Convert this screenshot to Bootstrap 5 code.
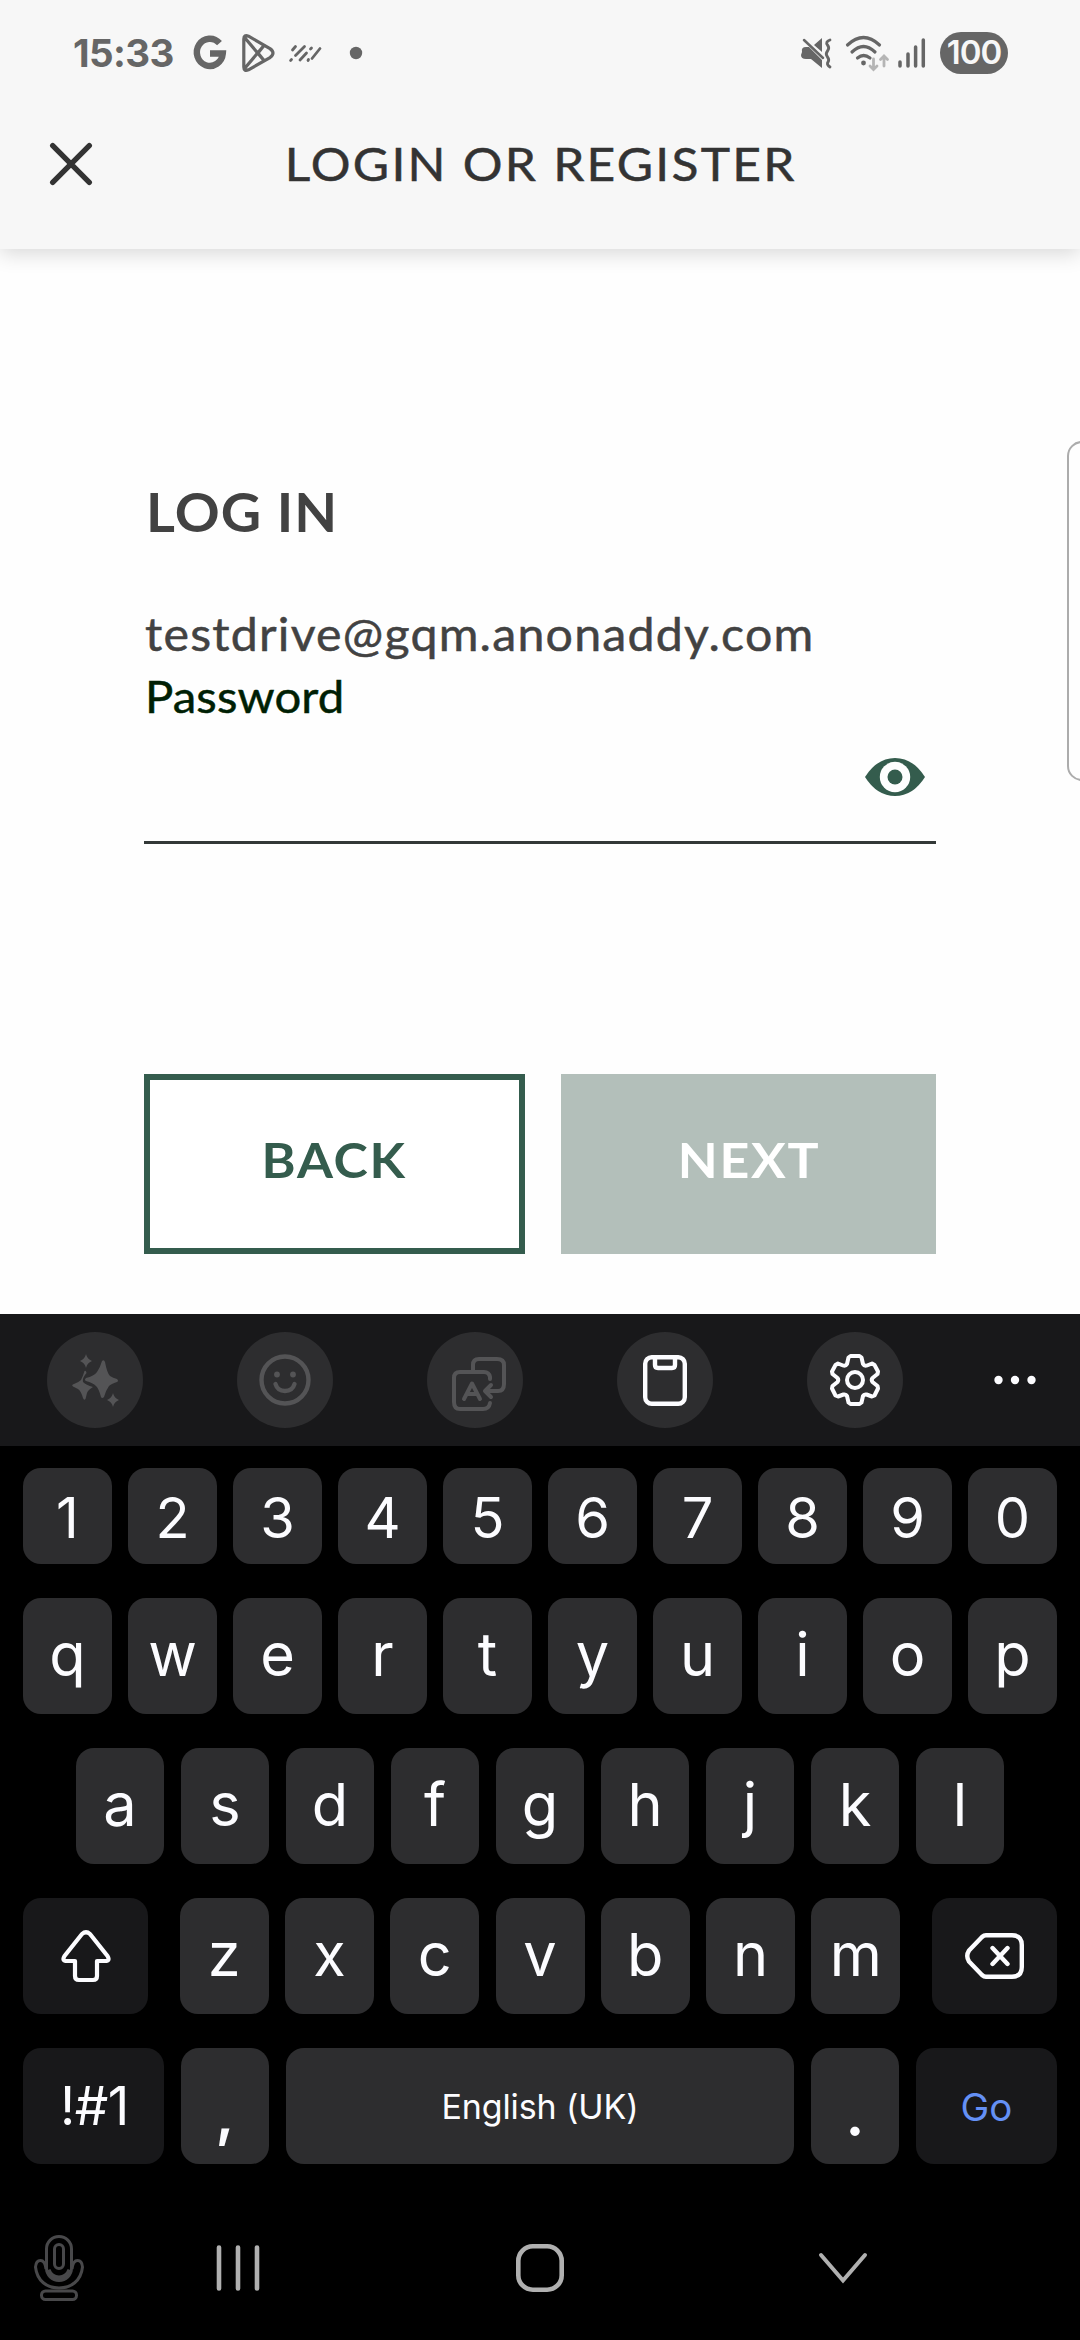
<!DOCTYPE html>
<html lang="en">
<head>
<meta charset="utf-8">
<meta name="viewport" content="width=device-width, initial-scale=1">
<title>Login or register</title>
<link href="https://cdn.jsdelivr.net/npm/bootstrap@5.3.0/dist/css/bootstrap.min.css" rel="stylesheet">
<style>
  body { width: 1080px; height: 2340px; background: #fefefe; overflow: hidden; font-family: Lato, "Open Sans", sans-serif; }
  svg { display: block; flex: none; overflow: visible; }
  .ui-font { font-family: Inter, Roboto, sans-serif; }

  .top-area { height: 249px; background: #f7f7f7; box-shadow: 0 4px 20px rgba(0,0,0,.16); z-index: 2; }
  .status { height: 106px; padding: 0 72px 0 73px; color: #666; }
  .clock { font-size: 38.5px; font-weight: 700; width: 121px; letter-spacing: -.6px; line-height: 1; white-space: nowrap; }
  .st-hatch { margin-left: 14px; }
  .st-dot { margin-left: 28px; }
  .st-wifi { margin-left: 13px; }
  .st-signal { margin-left: 9px; }
  .battery { width: 68px; height: 42px; margin-left: 14px; border-radius: 21px; background: #666; color: #f7f7f7; font-size: 33px; font-weight: 600; letter-spacing: -1px; }
  .title-row { height: 116px; padding-left: 50px; }
  .title-text { width: 796px; font-size: 46px; color: #333; letter-spacing: 2.1px; -webkit-text-stroke: .5px #333; line-height: 1; padding-left: 5px; transform: scaleX(1.08); }

  .form-area { height: 1065px; padding: 225px 144px 0; }
  .heading, .mail, .pass-label { transform-origin: 0 50%; transform: scaleX(1.05); }
  .heading { font-size: 53px; font-weight: 700; line-height: 76px; height: 76px; color: #424242; letter-spacing: 1px; padding-left: 2px; }
  .mail { font-size: 46px; line-height: 62px; height: 62px; margin-top: 53px; color: #424242; letter-spacing: 1.15px; padding-left: 1px; -webkit-text-stroke: .5px #424242; }
  .pass-label { font-size: 45px; line-height: 62px; height: 62px; color: #001f04; letter-spacing: .1px; padding-left: 1px; -webkit-text-stroke: .5px #001f04; }
  .pass-field { height: 117px; border-bottom: 3px solid #333837; padding: 31px 11px 0 0; }
  .actions { margin-top: 230px; gap: 36px; }
  .act { height: 180px; border-radius: 0; font-size: 48px; font-weight: 700; letter-spacing: 1.6px; padding: 0 0 9px; }
  .act span { display: inline-block; transform: scaleX(1.08); }
  .act-back { width: 381px; border: 6px solid #345c4d; color: #345c4d; background: #fff; }
  .act-next { width: 375px; border: 0; color: #fff; background: #b3bfba; }
  .edge-handle { position: absolute; top: 441px; left: 1067px; width: 40px; height: 340px; border: 2px solid #acacac; border-radius: 15px; background: #fefefe; }

  .keyboard { height: 1026px; background: #000; }
  .tools { height: 132px; background: #18181a; }
  .tool-cell { width: 190px; }
  .tool-last { width: 130px; }
  .tool { width: 96px; height: 96px; background: #2d2d2f; }
  .keys { padding: 22px 23px 0; }
  .krow { height: 116px; margin-bottom: 34px; }
  .krow-num { height: 96px; }
  .krow-mid { padding: 0 53px; }
  .letters { gap: 16.3px; }
  .key { width: 89px; height: 100%; border-radius: 18px; background: #2d2d2f; color: #fcfcff; font-size: 59.5px; line-height: 1; display: flex; align-items: center; justify-content: center; padding-bottom: 2px; }
  .krow-num .key { padding: 4px 0 0; font-size: 56px; }
  .krow-mid .key { width: 88px; }
  .key.dark { background: #18181a; }
  .key.k-wide { width: 125px; padding: 0; }
  .key.k-sym { width: 141px; font-size: 53px; letter-spacing: -.5px; padding: 0 0 0 2px; }
  .key.k-space { width: 508px; font-size: 34px; letter-spacing: -.1px; padding: 2px 0 0; }
  .key.k-punct { width: 88px; font-weight: 600; padding-top: 18px; }
  .key.k-go { color: #6490f5; font-size: 38.5px; letter-spacing: 0; padding: 3px 0 0; }
  .navrow { height: 140px; }
  .n1 { width: 118px; } .n2 { width: 240px; } .n3 { width: 364px; } .n4 { width: 242px; }
</style>
</head>
<body class="position-relative">
<header class="top-area position-relative">
  <div class="status ui-font d-flex align-items-center">
    <div class="clock">15:33</div>
    <svg width="32" height="34" viewBox="0 0 32 34" fill="none" stroke="#666" stroke-width="6.4"><path d="M25.5 7.2A13 13.6 0 1 0 28.8 17.5H16"/></svg>
    <svg class="ms-3" width="33" height="38" viewBox="0 0 33 38" fill="none" stroke="#666" stroke-width="3.2" stroke-linejoin="round"><path d="M1.8 5Q1.8 .2 6.5 2.2L28 14.6Q34 19 28 23.6L6.500 35.800Q1.800 37.800 1.800 33ZM3 4 22 26.500M3 34 22 11.500M22 11.500 16 19 22 26.500"/></svg>
    <svg class="st-hatch" width="32" height="18" viewBox="0 0 32 18" stroke="#666" stroke-width="2.8" stroke-linecap="round"><path d="M3.500 6 6.500 2.500M1.600 16.500 2.500 15.600M6.500 11.500 15.500 2.500M11 16 17.500 9M21.500 5 22.500 4M19 16.500 19.500 15.500M23 14.500 31 4.500"/></svg>
    <svg class="st-dot" width="14" height="14" viewBox="0 0 14 14"><circle cx="7" cy="7" r="6.200" fill="#666"/></svg>
    <div class="ms-auto d-flex align-items-center">
      <svg width="31" height="30" viewBox="0 0 31 30"><path d="M1 14Q0 9 5 9H8L21 22V30L10 21H5Q0 21 0 17ZM13 7 21 0V14Z" fill="#666"/><path d="M3 2 22 20" stroke="#666" stroke-width="2.500" stroke-linecap="round"/><path d="M29 2Q24 4 26.500 7T26.500 13T26.500 19T26.500 25Q26 27 29 29" fill="none" stroke="#666" stroke-width="2.800" stroke-linecap="round"/></svg>
      <svg class="st-wifi" width="44" height="36" viewBox="0 0 44 36" fill="none" stroke="#666" stroke-width="3.200" stroke-linecap="round"><path d="M2.500 10Q18.500-5 34.500 10M7 17Q18.500 6 30 17M12.500 23Q18.500 18 25 23"/><circle cx="18.500" cy="28" r="2.400" fill="#666" stroke="none"/><path d="M28.500 24V34M25 31 28.500 34.500 32 31M39 31V22M35.500 24.500 39 21 42.500 24.500" stroke="#b5b5b5" stroke-width="2.800"/></svg>
      <svg class="st-signal" width="28" height="30" viewBox="0 0 28 30" stroke="#666" stroke-width="3.500" stroke-linecap="round"><path d="M2 24V28M10 16V28M17.600 9V28M25.300 2V28"/></svg>
      <div class="battery d-flex align-items-center justify-content-center">100</div>
    </div>
  </div>
  <div class="title-row d-flex align-items-center">
    <svg width="42" height="42" viewBox="0 0 42 42" stroke="#333" stroke-width="5.400" stroke-linecap="round"><path d="M2.700 2.700 39.300 39.300M39.300 2.700 2.700 39.300"/></svg>
    <div class="title-text text-center ms-5">LOGIN OR REGISTER</div>
  </div>
</header>

<main class="form-area">
  <h1 class="heading m-0">LOG IN</h1>
  <div class="mail">testdrive@gqm.anonaddy.com</div>
  <label class="pass-label d-block">Password</label>
  <div class="pass-field d-flex justify-content-end">
    <svg width="60" height="38" viewBox="0 0 60 38"><path d="M0 19Q12 0 30 0T60 19Q48 38 30 38T0 19Z" fill="#345c4d"/><circle cx="30" cy="19" r="15.200" fill="#fefefe"/><circle cx="30" cy="19" r="7.500" fill="#345c4d"/></svg>
  </div>
  <div class="actions d-flex">
    <button class="btn act act-back" type="button"><span>BACK</span></button>
    <button class="btn act act-next" type="button"><span>NEXT</span></button>
  </div>
</main>
<div class="edge-handle"></div>

<section class="keyboard ui-font">
  <div class="tools d-flex align-items-center">
    <div class="tool-cell d-flex justify-content-center"><div class="tool rounded-circle d-flex align-items-center justify-content-center">
      <svg width="48" height="52" viewBox="0 0 48 52" fill="#545456"><path d="M31 7Q33 5 34 8Q36 19 39 22Q42 24 46 25Q48 27 46 28Q40 30 38 32Q35 36 33 43Q31 45 30 43Q28 35 25 32Q22 29 15 27Q13 26 15 24Q23 22 26 18Q29 14 31 7Z"/><path d="M13.500 17Q15 16 15.500 19Q11 24 12 28Q15 31 22 33Q17 36 16 39L14.500 45Q13 47 12 44Q10 37 7 35L2 32.500Q0 31 3 30Q8 28 10 26Q12 22 13.500 17ZM15 0Q16 5 21 7Q16 9 15 14Q14 9 9 7Q14 5 15 0ZM42 39Q43 44 48 46Q43 48 42 53Q41 48 36 46Q41 44 42 39Z"/></svg>
    </div></div>
    <div class="tool-cell d-flex justify-content-center"><div class="tool rounded-circle d-flex align-items-center justify-content-center">
      <svg width="52" height="52" viewBox="0 0 52 52" fill="none" stroke="#545456" stroke-width="4.400" stroke-linecap="round"><circle cx="26" cy="26" r="23.500"/><path d="M16.500 30Q18.500 37 26 37T35.500 30"/><g fill="#545456" stroke="none"><circle cx="18" cy="20.500" r="2.900"/><circle cx="34" cy="20.500" r="2.900"/></g></svg>
    </div></div>
    <div class="tool-cell d-flex justify-content-center"><div class="tool rounded-circle d-flex align-items-center justify-content-center ps-2 pt-2">
      <svg width="54" height="54" viewBox="0 0 54 54" fill="none" stroke="#545456" stroke-width="4" stroke-linecap="round" stroke-linejoin="round"><path d="M21 13V8Q21 2 27 2H45Q52 2 52 8V27Q52 34 46 34H34M39 28 33 34 39 40M38 22V20Q37 15 32 15H8Q2 15 2 21V45Q2 52 8 52H31Q37 52 38 46M12 42 20 26.500 28 42M15 37H25"/></svg>
    </div></div>
    <div class="tool-cell d-flex justify-content-center"><div class="tool rounded-circle d-flex align-items-center justify-content-center">
      <svg width="44" height="51" viewBox="0 0 44 51" fill="none" stroke="#fcfcff" stroke-width="4.400" stroke-linejoin="round"><rect x="2.200" y="2.200" width="39.600" height="46.600" rx="6.500"/><path d="M12 2.500V10Q12 13 15 13H29Q32 13 32 10V2.500"/></svg>
    </div></div>
    <div class="tool-cell d-flex justify-content-center"><div class="tool rounded-circle d-flex align-items-center justify-content-center">
      <svg width="50" height="52" viewBox="0 0 50 52" fill="none" stroke="#fcfcff" stroke-width="4" stroke-linejoin="round"><path d="M20.500 2H29.500L31.500 3.500 33 10Q34.500 12.500 37 11.500L42 9.500 44.500 11 48 17.500 47.500 20 42.500 24Q41 26 42.500 28L47.500 32 48 34.500 44.500 41.500 42 42.500 36.500 40.500Q34 40 33 42L31.500 48.500 29.500 50H20.500L18.500 48.500 17 42Q16 40 13.500 40.500L8 42.500 5.500 41.500 2 34.500 2.500 32 7.500 28Q9 26 7.500 24L2.500 20 2 17.500 5.500 11 8 9.500 13 11.500Q15.500 12.500 17 10L18.500 3.500Z"/><circle cx="25" cy="26" r="8"/></svg>
    </div></div>
    <div class="tool-last d-flex justify-content-center">
      <svg width="42" height="10" viewBox="0 0 42 10" fill="#fcfcff"><circle cx="4.500" cy="5" r="4.200"/><circle cx="21" cy="5" r="4.200"/><circle cx="37.500" cy="5" r="4.200"/></svg>
    </div>
  </div>

  <div class="keys">
    <div class="krow krow-num d-flex justify-content-between">
      <div class="key">1</div><div class="key">2</div><div class="key">3</div><div class="key">4</div><div class="key">5</div><div class="key">6</div><div class="key">7</div><div class="key">8</div><div class="key">9</div><div class="key">0</div>
    </div>
    <div class="krow d-flex justify-content-between">
      <div class="key">q</div><div class="key">w</div><div class="key">e</div><div class="key">r</div><div class="key">t</div><div class="key">y</div><div class="key">u</div><div class="key">i</div><div class="key">o</div><div class="key">p</div>
    </div>
    <div class="krow krow-mid d-flex justify-content-between">
      <div class="key">a</div><div class="key">s</div><div class="key">d</div><div class="key">f</div><div class="key">g</div><div class="key">h</div><div class="key">j</div><div class="key">k</div><div class="key">l</div>
    </div>
    <div class="krow d-flex justify-content-between">
      <div class="key dark k-wide"><svg width="50" height="52" viewBox="0 0 50 52" fill="none" stroke="#fcfcff" stroke-width="4.200" stroke-linejoin="round"><path d="M21 4Q25 .5 29 4L46.500 26Q49.500 31 44 31H36V46Q36 50 32 50H18Q14 50 14 46V31H6Q.5 31 3.500 26Z"/></svg></div>
      <div class="letters d-flex">
        <div class="key">z</div><div class="key">x</div><div class="key">c</div><div class="key">v</div><div class="key">b</div><div class="key">n</div><div class="key">m</div>
      </div>
      <div class="key dark k-wide"><svg width="59" height="46" viewBox="0 0 59 46" fill="none" stroke="#fcfcff" stroke-width="4.400" stroke-linejoin="round" stroke-linecap="round"><path d="M21 2.200H47Q56.800 2.200 56.800 12V34Q56.800 43.800 47 43.800H21Q19 43.800 17 42L4 28.500Q.5 23 4 17.500L17 4Q19 2.200 21 2.200ZM27.500 15 42.500 31M42.500 15 27.500 31"/></svg></div>
    </div>
    <div class="krow d-flex justify-content-between">
      <div class="key dark k-sym">!#1</div>
      <div class="key k-punct">,</div>
      <div class="key k-space">English (UK)</div>
      <div class="key k-punct">.</div>
      <div class="key dark k-sym k-go">Go</div>
    </div>
  </div>

  <div class="navrow d-flex align-items-center">
    <div class="n1 d-flex justify-content-center"><svg width="50" height="66" viewBox="0 0 50 66" fill="none" stroke="#48484a" stroke-width="3"><rect x="12.500" y="1.500" width="25" height="44" rx="12.500"/><rect x="20.500" y="9.500" width="9" height="24" rx="4.500"/><path d="M12 34Q11 25.500 6.500 25.500T1.500 32C3 46 13 53 25 53S47 46 48.500 32Q48 25.500 43.500 25.500T38 34"/><path d="M14 35Q17 43 25 43T36 35" stroke-width="5"/><rect x="7.500" y="56" width="35" height="8.500" rx="4"/></svg></div>
    <div class="n2 d-flex justify-content-center"><svg width="44" height="46" viewBox="0 0 44 46" stroke="#b0b0b0" stroke-width="4.600" stroke-linecap="round"><path d="M3 2.500V43.500M22 2.500V43.500M41 2.500V43.500"/></svg></div>
    <div class="n3 d-flex justify-content-center"><svg width="48" height="48" viewBox="0 0 48 48" fill="none" stroke="#b0b0b0" stroke-width="4.600"><rect x="2.300" y="2.300" width="43.400" height="43.400" rx="14.500"/></svg></div>
    <div class="n4 d-flex justify-content-center"><svg width="48" height="30" viewBox="0 0 48 30" fill="none" stroke="#b0b0b0" stroke-width="4" stroke-linecap="round"><path d="M2 2 24 27.500 46 2"/></svg></div>
  </div>
</section>
<script src="https://cdn.jsdelivr.net/npm/bootstrap@5.3.0/dist/js/bootstrap.bundle.min.js"></script>
</body>
</html>
